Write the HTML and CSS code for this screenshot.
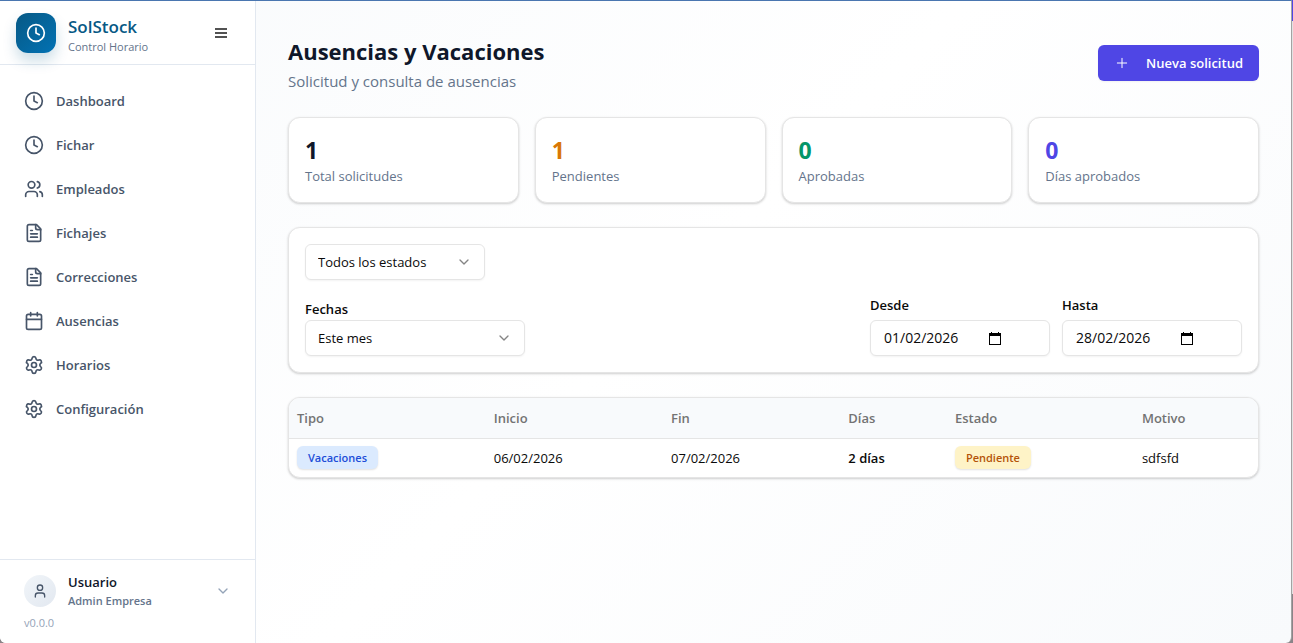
FILE: index.html
```html
<!DOCTYPE html>
<html lang="es">

<head>
    <meta charset="UTF-8">
    <meta name="viewport" content="width=device-width, initial-scale=1.0">
    <title>SolStock - Ausencias y Vacaciones</title>
    <link rel="stylesheet" href="styles.css">
</head>

<body>
    <!-- Iconos compartidos -->
    <svg class="sprite" aria-hidden="true">
        <symbol id="icon-clock" viewBox="0 0 24 24">
            <circle cx="12" cy="12" r="10" />
            <path d="M12 6v6l4 2" />
        </symbol>
        <symbol id="icon-users" viewBox="0 0 24 24">
            <path d="M16 21v-2a4 4 0 0 0-4-4H6a4 4 0 0 0-4 4v2" />
            <circle cx="9" cy="7" r="4" />
            <path d="M22 21v-2a4 4 0 0 0-3-3.87" />
            <path d="M16 3.13a4 4 0 0 1 0 7.75" />
        </symbol>
        <symbol id="icon-file" viewBox="0 0 24 24">
            <path d="M15 2H6a2 2 0 0 0-2 2v16a2 2 0 0 0 2 2h12a2 2 0 0 0 2-2V7Z" />
            <path d="M14 2v4a2 2 0 0 0 2 2h4" />
            <path d="M10 9H8" />
            <path d="M16 13H8" />
            <path d="M16 17H8" />
        </symbol>
        <symbol id="icon-calendar" viewBox="0 0 24 24">
            <path d="M8 2v4" />
            <path d="M16 2v4" />
            <rect x="3" y="4" width="18" height="18" rx="2" />
            <path d="M3 10h18" />
        </symbol>
        <symbol id="icon-settings" viewBox="0 0 24 24">
            <path d="M9.671 4.136a2.34 2.34 0 0 1 4.659 0 2.34 2.34 0 0 0 3.319 1.915 2.34 2.34 0 0 1 2.33 4.033 2.34 2.34 0 0 0 0 3.831 2.34 2.34 0 0 1-2.33 4.033 2.34 2.34 0 0 0-3.319 1.915 2.34 2.34 0 0 1-4.659 0 2.34 2.34 0 0 0-3.32-1.915 2.34 2.34 0 0 1-2.33-4.033 2.34 2.34 0 0 0 0-3.831A2.34 2.34 0 0 1 6.35 6.051a2.34 2.34 0 0 0 3.319-1.915" />
            <circle cx="12" cy="12" r="3" />
        </symbol>
        <symbol id="icon-user" viewBox="0 0 24 24">
            <path d="M19 21v-2a4 4 0 0 0-4-4H9a4 4 0 0 0-4 4v2" />
            <circle cx="12" cy="7" r="4" />
        </symbol>
        <symbol id="icon-chevron" viewBox="0 0 24 24">
            <path d="m6 9 6 6 6-6" />
        </symbol>
        <symbol id="icon-plus" viewBox="0 0 24 24">
            <path d="M5 12h14" />
            <path d="M12 5v14" />
        </symbol>
    </svg>

    <div class="app">
        <aside class="sidebar">
            <div class="brand">
                <div class="brand-logo">
                    <svg class="icon"><use href="#icon-clock" /></svg>
                </div>
                <div class="brand-text">
                    <div class="brand-name">SolStock</div>
                    <div class="brand-sub">Control Horario</div>
                </div>
                <button class="menu-button" type="button" aria-label="Menú">
                    <svg viewBox="0 0 12 10" width="12" height="10">
                        <path d="M0 0h12v2H0zM0 4h12v2H0zM0 8h12v2H0z" />
                    </svg>
                </button>
            </div>

            <nav class="nav">
                <a class="nav-link" href="#"><svg class="icon"><use href="#icon-clock" /></svg>Dashboard</a>
                <a class="nav-link" href="#"><svg class="icon"><use href="#icon-clock" /></svg>Fichar</a>
                <a class="nav-link" href="#"><svg class="icon"><use href="#icon-users" /></svg>Empleados</a>
                <a class="nav-link" href="#"><svg class="icon"><use href="#icon-file" /></svg>Fichajes</a>
                <a class="nav-link" href="#"><svg class="icon"><use href="#icon-file" /></svg>Correcciones</a>
                <a class="nav-link" href="#"><svg class="icon"><use href="#icon-calendar" /></svg>Ausencias</a>
                <a class="nav-link" href="#"><svg class="icon"><use href="#icon-settings" /></svg>Horarios</a>
                <a class="nav-link" href="#"><svg class="icon"><use href="#icon-settings" /></svg>Configuración</a>
            </nav>

            <div class="sidebar-footer">
                <button class="user-button" type="button">
                    <span class="avatar"><svg class="icon icon-small"><use href="#icon-user" /></svg></span>
                    <span class="user-text">
                        <span class="user-name">Usuario</span>
                        <span class="user-role">Admin Empresa</span>
                    </span>
                    <svg class="icon icon-small user-chevron"><use href="#icon-chevron" /></svg>
                </button>
                <div class="version">v0.0.0</div>
            </div>
        </aside>

        <main class="main">
            <header class="page-header">
                <div>
                    <h1>Ausencias y Vacaciones</h1>
                    <p class="subtitle">Solicitud y consulta de ausencias</p>
                </div>
                <button class="primary-button" type="button">
                    <svg class="icon icon-small"><use href="#icon-plus" /></svg>
                    Nueva solicitud
                </button>
            </header>

            <section class="stats">
                <div class="card stat">
                    <div class="stat-value">1</div>
                    <div class="stat-label">Total solicitudes</div>
                </div>
                <div class="card stat">
                    <div class="stat-value stat-amber">1</div>
                    <div class="stat-label">Pendientes</div>
                </div>
                <div class="card stat">
                    <div class="stat-value stat-green">0</div>
                    <div class="stat-label">Aprobadas</div>
                </div>
                <div class="card stat">
                    <div class="stat-value stat-indigo">0</div>
                    <div class="stat-label">Días aprobados</div>
                </div>
            </section>

            <form class="card filters">
                <div class="select-box select-status">
                    <select id="estado" name="estado" aria-label="Estado">
                        <option>Todos los estados</option>
                        <option>Pendientes</option>
                        <option>Aprobadas</option>
                    </select>
                    <svg class="icon icon-small"><use href="#icon-chevron" /></svg>
                </div>
                <div class="filter-row">
                    <div class="field">
                        <label for="fechas">Fechas</label>
                        <div class="select-box select-range">
                            <select id="fechas" name="fechas">
                                <option>Este mes</option>
                                <option>Mes anterior</option>
                            </select>
                            <svg class="icon icon-small"><use href="#icon-chevron" /></svg>
                        </div>
                    </div>
                    <div class="dates">
                        <div class="field date-field">
                            <label for="desde">Desde</label>
                            <div class="date-box">
                                <input type="text" id="desde" name="desde" value="01/02/2026">
                                <button type="button" aria-label="Abrir calendario">
                                    <svg viewBox="0 0 12 13" width="12" height="13">
                                        <path d="M2 0h1v1h6V0h1v1h2v12H0V1h2zM1 4v8h10V4z" fill-rule="evenodd" />
                                    </svg>
                                </button>
                            </div>
                        </div>
                        <div class="field date-field">
                            <label for="hasta">Hasta</label>
                            <div class="date-box">
                                <input type="text" id="hasta" name="hasta" value="28/02/2026">
                                <button type="button" aria-label="Abrir calendario">
                                    <svg viewBox="0 0 12 13" width="12" height="13">
                                        <path d="M2 0h1v1h6V0h1v1h2v12H0V1h2zM1 4v8h10V4z" fill-rule="evenodd" />
                                    </svg>
                                </button>
                            </div>
                        </div>
                    </div>
                </div>
            </form>

            <div class="card table-card">
                <table>
                    <colgroup>
                        <col class="col-tipo">
                        <col class="col-fecha">
                        <col class="col-fecha">
                        <col class="col-dias">
                        <col class="col-estado">
                        <col>
                    </colgroup>
                    <thead>
                        <tr>
                            <th>Tipo</th>
                            <th>Inicio</th>
                            <th>Fin</th>
                            <th>Días</th>
                            <th>Estado</th>
                            <th>Motivo</th>
                        </tr>
                    </thead>
                    <tbody>
                        <tr>
                            <td><span class="badge badge-blue">Vacaciones</span></td>
                            <td>06/02/2026</td>
                            <td>07/02/2026</td>
                            <td class="days">2 días</td>
                            <td><span class="badge badge-amber">Pendiente</span></td>
                            <td>sdfsfd</td>
                        </tr>
                    </tbody>
                </table>
            </div>
        </main>
    </div>
</body>

</html>
```
FILE: styles.css
```css
* {
    box-sizing: border-box;
}

body {
    margin: 0;
    padding-right: 1px;
    font-family: 'Segoe UI', 'Open Sans', 'Noto Sans', sans-serif;
    font-size: 13px;
    line-height: 20px;
    color: #0a0a0a;
    background: linear-gradient(#4f46e5 21px, #e2e2e2 21px, #e2e2e2 594px, #8a8488 594px);
}

button,
input,
select {
    font: inherit;
    color: inherit;
}

button {
    padding: 0;
    border: none;
    background: none;
    cursor: pointer;
}

.sprite {
    display: none;
}

.icon {
    width: 20px;
    height: 20px;
    flex-shrink: 0;
    fill: none;
    stroke: currentColor;
    stroke-width: 2;
    stroke-linecap: round;
    stroke-linejoin: round;
}

.icon-small {
    width: 16px;
    height: 16px;
}

.app {
    display: flex;
    min-height: 100vh;
    border-top: 1px solid #4a76b0;
    border-right: 1px solid #a3a3a3;
    border-radius: 0 0 6px 6px;
    overflow: hidden;
    background: linear-gradient(135deg, #f8fafc, #ffffff 50%, #f8fafc);
}

/* Barra lateral */
.sidebar {
    display: flex;
    flex-direction: column;
    width: 256px;
    flex-shrink: 0;
    background-color: #fff;
    border-right: 1px solid #e2e8f0;
}

.brand {
    display: flex;
    align-items: center;
    gap: 12px;
    height: 64px;
    padding: 0 28px 0 16px;
    border-bottom: 1px solid #e2e8f0;
}

.brand-logo {
    display: flex;
    align-items: center;
    justify-content: center;
    width: 40px;
    height: 40px;
    border-radius: 12px;
    color: #fff;
    background: linear-gradient(135deg, #075985, #0272b4);
    box-shadow: 0 8px 14px rgba(7, 89, 133, 0.2);
}

.brand-text {
    flex: 1;
    padding-top: 4px;
}

.brand-name {
    font-size: 17px;
    font-weight: 600;
    line-height: 24px;
    color: #075985;
}

.brand-sub {
    font-size: 11px;
    line-height: 16px;
    color: #64748b;
}

.menu-button {
    display: flex;
    fill: #525252;
}

.nav {
    display: flex;
    flex-direction: column;
    flex: 1;
    gap: 4px;
    padding: 16px 12px;
}

.nav-link {
    display: flex;
    align-items: center;
    gap: 12px;
    height: 40px;
    padding: 0 12px;
    font-weight: 600;
    color: #475569;
    text-decoration: none;
}

.sidebar-footer {
    padding: 12px 24px;
    border-top: 1px solid #e2e8f0;
}

.user-button {
    display: flex;
    align-items: center;
    gap: 12px;
    width: 100%;
    text-align: left;
}

.avatar {
    display: flex;
    align-items: center;
    justify-content: center;
    width: 32px;
    height: 32px;
    border-radius: 50%;
    color: #475569;
    background: linear-gradient(135deg, #f1f5f9, #e2e8f0);
}

.user-text {
    flex: 1;
}

.user-name,
.user-role {
    display: block;
}

.user-name {
    font-weight: 600;
    color: #0f172a;
}

.user-role {
    font-size: 11px;
    font-weight: 600;
    line-height: 18px;
    color: #64748b;
}

.user-chevron {
    color: #94a3b8;
}

.version {
    margin-top: 5px;
    font-size: 11px;
    line-height: 16px;
    color: #94a3b8;
}

/* Contenido */
.main {
    display: flex;
    flex-direction: column;
    flex: 1;
    gap: 24px;
    padding: 32px;
}

.page-header {
    display: flex;
    align-items: center;
    justify-content: space-between;
}

h1 {
    margin: 0;
    font-size: 22px;
    font-weight: 700;
    line-height: 36px;
    color: #0f172a;
}

.subtitle {
    margin: 0;
    font-size: 15px;
    line-height: 24px;
    color: #64748b;
}

.primary-button {
    display: flex;
    align-items: center;
    gap: 16px;
    height: 36px;
    padding: 0 16px;
    border-radius: 6px;
    font-weight: 600;
    color: #fff;
    background-color: #4f46e5;
    box-shadow: 0 1px 2px rgba(0, 0, 0, 0.05);
}

.primary-button .icon {
    stroke-width: 1.5;
}

.card {
    background-color: #fff;
    border: 1px solid #e5e5e5;
    border-radius: 12px;
    box-shadow: 0 1px 3px rgba(0, 0, 0, 0.1), 0 1px 2px rgba(0, 0, 0, 0.1);
}

.stats {
    display: grid;
    grid-template-columns: repeat(4, 1fr);
    gap: 16px;
}

.stat {
    padding: 16px;
}

.stat-value {
    font-size: 23px;
    font-weight: 700;
    line-height: 32px;
    color: #0f172a;
}

.stat-amber {
    color: #d97706;
}

.stat-green {
    color: #059669;
}

.stat-indigo {
    color: #4f46e5;
}

.stat-label {
    color: #64748b;
}

.filters {
    display: flex;
    flex-direction: column;
    gap: 16px;
    padding: 16px;
}

.filter-row {
    display: flex;
    align-items: flex-end;
    justify-content: space-between;
}

.field {
    display: flex;
    flex-direction: column;
    gap: 2px;
}

.field label {
    font-weight: 600;
    line-height: 18px;
}

.dates {
    display: flex;
    gap: 12px;
}

.date-field {
    gap: 6px;
}

.select-box {
    display: grid;
    align-items: center;
}

.select-box > * {
    grid-area: 1 / 1;
}

.select-box .icon {
    justify-self: end;
    margin-right: 13px;
    color: #858585;
    pointer-events: none;
}

.select-status {
    width: 180px;
}

.select-range {
    width: 220px;
}

select,
.date-box {
    width: 100%;
    height: 36px;
    padding: 0 12px;
    border: 1px solid #e5e5e5;
    border-radius: 6px;
    background-color: #fff;
    box-shadow: 0 1px 2px rgba(0, 0, 0, 0.05);
}

select {
    appearance: none;
}

.date-box {
    display: flex;
    align-items: center;
    width: 180px;
}

.date-box input {
    width: 106px;
    padding: 0 1px;
    border: none;
    font-size: 14px;
    background: none;
}

.date-box button {
    display: flex;
}

/* Tabla */
.table-card {
    overflow: hidden;
}

table {
    width: 100%;
    table-layout: fixed;
    border-collapse: collapse;
}

.col-tipo {
    width: 20.3%;
}

.col-fecha {
    width: 18.3%;
}

.col-dias {
    width: 11%;
}

.col-estado {
    width: 19.3%;
}

th,
td {
    height: 40px;
    padding: 0 8px;
    text-align: left;
}

th {
    font-weight: 600;
    color: #737373;
    background-color: #f8fafc;
    border-bottom: 1px solid #e5e5e5;
}

td {
    height: 39px;
}

.days {
    font-weight: 600;
}

.badge {
    display: inline-block;
    padding: 2px 11px;
    border-radius: 6px;
    font-size: 11px;
    font-weight: 600;
    line-height: 19px;
    vertical-align: middle;
    box-shadow: 0 1px 2px rgba(0, 0, 0, 0.12);
}

.badge-blue {
    color: #1d4ed8;
    background-color: #dbeafe;
}

.badge-amber {
    color: #b45309;
    background-color: #fef3c7;
}
```
